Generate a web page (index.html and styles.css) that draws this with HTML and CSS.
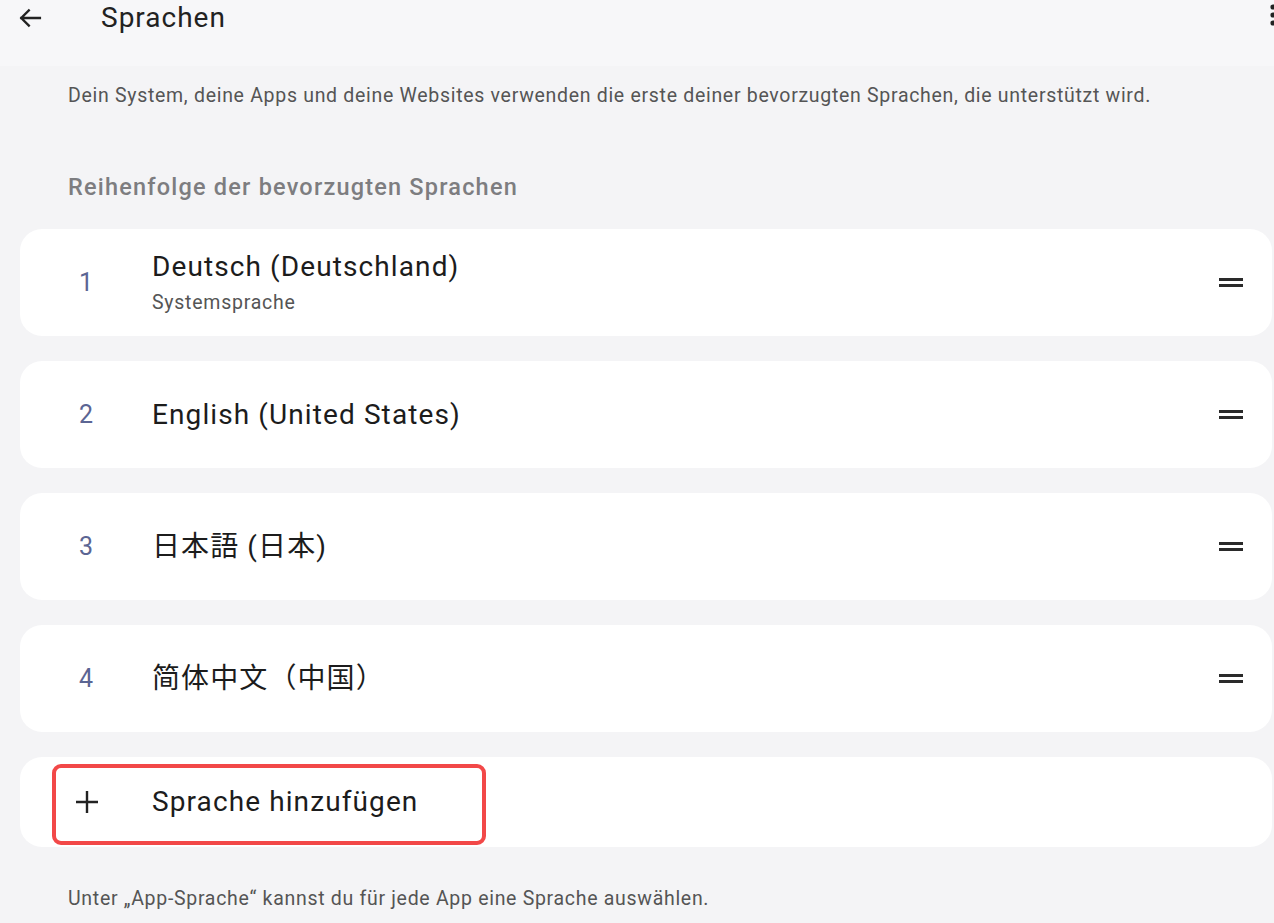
FILE: index.html
```html
<!DOCTYPE html>
<html lang="de">
<head>
<meta charset="utf-8">
<title>Sprachen</title>
<link rel="stylesheet" href="styles.css">
</head>
<body>
<header class="topbar">
  <svg class="back" width="28" height="28" viewBox="0 0 24 24"><path d="M20.5 12H4.5M11 5.5L4.5 12l6.5 6.5" fill="none" stroke="#222" stroke-width="2" stroke-linecap="square"/></svg>
  <h1 class="title">Sprachen</h1>
  <svg class="more" width="8" height="26" viewBox="0 0 8 26"><circle cx="4" cy="5" r="2.6" fill="#222"/><circle cx="4" cy="13" r="2.6" fill="#222"/><circle cx="4" cy="21" r="2.6" fill="#222"/></svg>
</header>
<main class="content">
  <p class="desc">Dein System, deine Apps und deine Websites verwenden die erste deiner bevorzugten Sprachen, die unterstützt wird.</p>
  <h2 class="section">Reihenfolge der bevorzugten Sprachen</h2>
  <ul class="list">
    <li class="card card-tall">
      <span class="num">1</span>
      <div class="text">
        <div class="name">Deutsch (Deutschland)</div>
        <div class="sub">Systemsprache</div>
      </div>
      <span class="handle"></span>
    </li>
    <li class="card">
      <span class="num">2</span>
      <div class="text"><div class="name">English (United States)</div></div>
      <span class="handle"></span>
    </li>
    <li class="card">
      <span class="num">3</span>
      <div class="text"><div class="name cjk-jp">日本語 (日本)</div></div>
      <span class="handle"></span>
    </li>
    <li class="card">
      <span class="num">4</span>
      <div class="text"><div class="name cjk-sc">简体中文（中国）</div></div>
      <span class="handle"></span>
    </li>
    <li class="card card-add">
      <span class="num plus"><svg width="24" height="24" viewBox="0 0 24 24"><path d="M12 1v22M1 12h22" stroke="#222" stroke-width="2.4"/></svg></span>
      <div class="text"><div class="name">Sprache hinzufügen</div></div>
      <span class="highlight"></span>
    </li>
  </ul>
  <p class="foot">Unter „App-Sprache“ kannst du für jede App eine Sprache auswählen.</p>
</main>
</body>
</html>
```

FILE: styles.css
```css
* { box-sizing: border-box; }
html, body { margin: 0; padding: 0; }
body {
  background: #f4f4f6;
  font-family: Roboto, "Noto Sans", sans-serif;
  color: #1f1f1f;
  width: 1274px;
  height: 923px;
  overflow: hidden;
}
.topbar {
  height: 66px;
  background: #f7f7f9;
  display: flex;
  align-items: flex-start;
  position: relative;
  padding-top: 4px;
}
.back { margin-left: 16px; }
.title {
  margin: 1px 0 0 57px;
  font-weight: 400;
  font-size: 28px;
  letter-spacing: 1px;
  line-height: 26px;
  color: #222;
}
.more { position: absolute; right: -3px; top: 2px; width: 8px; }
.content { padding: 0 2px 0 20px; }
.desc {
  margin: 17px 0 0 48px;
  font-size: 19.5px;
  letter-spacing: 0.7px;
  line-height: 26px;
  color: #555;
}
.section {
  margin: 64px 0 0 48px;
  font-weight: 500;
  font-size: 23.5px;
  letter-spacing: 1.2px;
  line-height: 28px;
  color: #7d7d80;
}
.list {
  list-style: none;
  margin: 28px 0 0 0;
  padding: 0;
  display: flex;
  flex-direction: column;
  gap: 25px;
}
.card {
  background: #ffffff;
  border-radius: 22px;
  height: 107px;
  display: flex;
  align-items: center;
  position: relative;
}
.card-add { height: 90px; }
.num {
  width: 132px;
  padding-left: 59px;
  font-size: 25px;
  color: #5b6593;
  flex: none;
}
.num.plus { padding-left: 55px; display: flex; }
.text { flex: 1; }
.name {
  font-size: 28px;
  letter-spacing: 1.1px;
  line-height: 32px;
  color: #1c1c1c;
}
.cjk-jp { font-family: Roboto, "Noto Sans CJK JP", sans-serif; }
.cjk-sc { font-family: Roboto, "Noto Sans CJK SC", sans-serif; }
.sub {
  font-size: 19.5px;
  letter-spacing: 0.75px;
  line-height: 24px;
  margin-top: 8px;
  color: #555;
}
.handle {
  width: 24px;
  height: 9px;
  margin-right: 29px;
  border-top: 3px solid #2a2a2a;
  border-bottom: 3px solid #2a2a2a;
  flex: none;
}
.highlight {
  position: absolute;
  left: 32px;
  top: 7px;
  width: 434px;
  height: 81px;
  border: 4px solid #f24848;
  border-radius: 9px;
}
.foot {
  margin: 39px 0 0 48px;
  font-size: 19.5px;
  letter-spacing: 0.7px;
  line-height: 26px;
  color: #555;
}
```
